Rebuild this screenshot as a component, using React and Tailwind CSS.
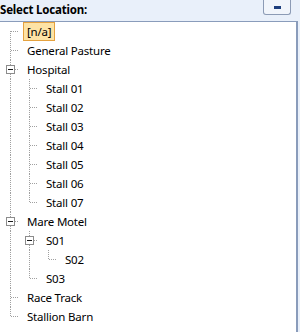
import React from "react";

const tree = [
  { t: "[n/a]", sel: true },
  { t: "General Pasture" },
  {
    t: "Hospital",
    c: ["Stall 01", "Stall 02", "Stall 03", "Stall 04", "Stall 05", "Stall 06", "Stall 07"].map((t) => ({ t })),
  },
  { t: "Mare Motel", c: [{ t: "S01", c: [{ t: "S02" }] }, { t: "S03" }] },
  { t: "Race Track" },
  { t: "Stallion Barn" },
];

function flatten(nodes, guides, out, level) {
  nodes.forEach((n, i) => {
    const isLast = i === nodes.length - 1;
    const isFirstRoot = level === 0 && i === 0;
    out.push({ ...n, guides, isLast, isFirstRoot, hasKids: !!(n.c && n.c.length) });
    if (n.c) flatten(n.c, [...guides, !isLast], out, level + 1);
  });
  return out;
}

const rows = flatten(tree, [], [], 0);
const LX = 10.5;
const DOT = "#a0a0a0";

function Guide({ on }) {
  return (
    <svg width="19" height="19" className="shrink-0 block" shapeRendering="crispEdges">
      {on && <line x1={LX} y1="0" x2={LX} y2="19" stroke={DOT} strokeDasharray="1 1" />}
    </svg>
  );
}

function Conn({ isLast, isFirstRoot, hasKids }) {
  const y1 = isFirstRoot ? 9 : 0;
  const y2 = isLast ? 10 : 19;
  return (
    <svg width="19" height="19" className="shrink-0 block" shapeRendering="crispEdges">
      <line x1={LX} y1={y1} x2={LX} y2={y2} stroke={DOT} strokeDasharray="1 1" />
      <line x1="11" y1="9.5" x2="20" y2="9.5" stroke={DOT} strokeDasharray="1 1" />
      {hasKids && (
        <g>
          <rect x="6.5" y="5.5" width="8" height="8" fill="#fff" stroke="#8c8c8c" />
          <line x1="8" y1="9.5" x2="13" y2="9.5" stroke="#1a1a1a" />
        </g>
      )}
    </svg>
  );
}

export default function App() {
  return (
    <div
      className="w-[300px] h-[332px] bg-[#e9f0fa] flex flex-col overflow-hidden text-black"
      style={{ fontFamily: '"Noto Sans", "Open Sans", sans-serif' }}
    >
      <div className="h-[21px] flex items-start justify-between shrink-0">
        <div className="text-[11.5px] font-bold leading-[19px] tracking-[-0.2px]">Select Location:</div>
        <div className="mr-[9px] w-[28px] h-[15px] border border-t-0 border-[#8c9bb5] rounded-b-[3px] bg-[#f1f5fb] flex items-center justify-center">
          <div className="w-[7px] h-[3px] bg-[#1e3f7d]" />
        </div>
      </div>
      <div className="w-[298px] flex-1 bg-white border-t border-r-2 border-t-[#8a9cbb] border-r-[#8a9cbb] flex flex-col">
        {rows.map((r, i) => (
          <div key={i} className="h-[19px] flex items-center shrink-0">
            {r.guides.map((g, j) => (
              <Guide key={j} on={g} />
            ))}
            <Conn isLast={r.isLast} isFirstRoot={r.isFirstRoot} hasKids={r.hasKids} />
            {r.sel ? (
              <span className="ml-[4px] h-[19px] px-[3px] border border-[#e5a23f] bg-[#fde3a5] text-[11.5px] leading-[17px] tracking-[-0.2px]">
                {r.t}
              </span>
            ) : (
              <span className="ml-[8px] text-[11.5px] leading-[19px] tracking-[-0.2px] whitespace-nowrap">{r.t}</span>
            )}
          </div>
        ))}
      </div>
    </div>
  );
}
